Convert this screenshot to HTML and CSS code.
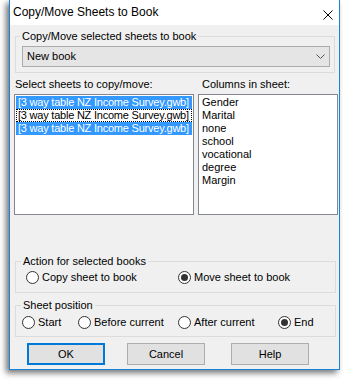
FILE: index.html
```html
<!DOCTYPE html>
<html>
<head>
<meta charset="utf-8">
<link rel="stylesheet" href="styles.css">
</head>
<body>
<div class="window">
  <div class="titlebar">
    <span class="title">Copy/Move Sheets to Book</span>
    <svg class="close" width="10" height="10" viewBox="0 0 10 10"><path d="M0.5 0.5 L9.5 9.5 M9.5 0.5 L0.5 9.5" stroke="#000" stroke-width="1" fill="none"/></svg>
  </div>
  <div class="client">
    <fieldset class="group group-book">
      <legend>Copy/Move selected sheets to book</legend>
      <div class="combo">
        <span>New book</span>
        <svg class="chev" width="9" height="5" viewBox="0 0 9 5"><path d="M0.5 0.5 L4.5 4.5 L8.5 0.5" fill="none" stroke="#555" stroke-width="1"/></svg>
      </div>
    </fieldset>

    <div class="lists">
      <div class="list-col col-sheets">
        <div class="label">Select sheets to copy/move:</div>
        <div class="listbox">
          <div class="item sel">[3 way table NZ Income Survey.gwb]</div>
          <div class="item focus">[3 way table NZ Income Survey.gwb]</div>
          <div class="item sel">[3 way table NZ Income Survey.gwb]</div>
        </div>
      </div>
      <div class="list-col col-columns">
        <div class="label">Columns in sheet:</div>
        <div class="listbox">
          <div class="item">Gender</div>
          <div class="item">Marital</div>
          <div class="item">none</div>
          <div class="item">school</div>
          <div class="item">vocational</div>
          <div class="item">degree</div>
          <div class="item">Margin</div>
        </div>
      </div>
    </div>

    <fieldset class="group group-action">
      <legend>Action for selected books</legend>
      <div class="radios radios-action">
        <div class="radio"><span class="circle"></span><span>Copy sheet to book</span></div>
        <div class="radio checked"><span class="circle"></span><span>Move sheet to book</span></div>
      </div>
    </fieldset>

    <fieldset class="group group-pos">
      <legend>Sheet position</legend>
      <div class="radios radios-pos">
        <div class="radio"><span class="circle"></span><span>Start</span></div>
        <div class="radio"><span class="circle"></span><span>Before current</span></div>
        <div class="radio"><span class="circle"></span><span>After current</span></div>
        <div class="radio checked"><span class="circle"></span><span>End</span></div>
      </div>
    </fieldset>

    <div class="buttons">
      <div class="btn btn-ok">OK</div>
      <div class="btn btn-cancel">Cancel</div>
      <div class="btn btn-help">Help</div>
    </div>
  </div>
</div>
</body>
</html>
```

FILE: styles.css
```css
html, body {
  margin: 0;
  padding: 0;
  background: #ffffff;
}

body {
  width: 343px;
  height: 380px;
  overflow: hidden;
}

.window {
  margin-left: 9px;
  width: 331px;
  height: 370px;
  box-sizing: border-box;
  border-left: 1px solid #1883d7;
  border-right: 1px solid #1883d7;
  border-bottom: 1px solid #1883d7;
  box-shadow: -3px 3px 6px rgba(0, 0, 0, 0.55);
  font-family: "Liberation Sans", Arial, sans-serif;
  font-size: 11px;
  line-height: 13px;
  color: #000;
  display: flex;
  flex-direction: column;
}

.titlebar {
  height: 25px;
  background: #ffffff;
  display: flex;
  justify-content: space-between;
  align-items: flex-start;
  padding: 0 6px 0 3px;
}

.title {
  font-size: 12px;
  line-height: 25px;
}

.close {
  margin-top: 10px;
}

.client {
  flex: 1;
  background: #f0f0f0;
  padding-top: 5px;
  display: flex;
  flex-direction: column;
}

.group {
  margin: 0 0 0 5px;
  padding: 0;
  border: 1px solid #dcdcdc;
  min-inline-size: 0;
  box-sizing: border-box;
}

.group legend {
  padding: 0 2px;
  line-height: 13px;
}

.group-book {
  width: 320px;
}

.group-book legend {
  margin-left: 4px;
}

.combo {
  margin: 3px 4px 5px 6px;
  height: 21px;
  box-sizing: border-box;
  border: 1px solid #acacac;
  background: #e5e5e5;
  display: flex;
  align-items: center;
  justify-content: space-between;
  padding: 0 4px 0 4px;
}

.chev {
  display: block;
}

.lists {
  margin-top: 5px;
  display: flex;
}

.list-col {
  margin-left: 4px;
  display: flex;
  flex-direction: column;
}

.col-sheets {
  width: 180px;
}

.col-columns {
  width: 140px;
}

.label {
  height: 13px;
  margin-bottom: 3px;
}

.col-sheets .label {
  padding-left: 1px;
}

.col-columns .label {
  padding-left: 4px;
}

.listbox {
  height: 121px;
  box-sizing: border-box;
  border: 1px solid #828790;
  background: #ffffff;
  padding: 1px;
  overflow: hidden;
}

.item {
  height: 13px;
  line-height: 13px;
  padding-left: 2px;
  white-space: nowrap;
  box-sizing: border-box;
}

.col-sheets .item {
  letter-spacing: -0.22px;
}

.item.sel {
  background: #3399ff;
  color: #ffffff;
}

.item.focus {
  outline: 1px dotted #000;
  outline-offset: -1px;
}

.group-action {
  margin-top: 40px;
  width: 321px;
}

.group-action legend,
.group-pos legend {
  margin-left: 5px;
}

.radios {
  display: grid;
  height: 13px;
}

.radios-action {
  margin: 3px 0 8px 0;
  padding-left: 10px;
  grid-template-columns: 152px auto;
}

.group-pos {
  margin-top: 6px;
  width: 321px;
}

.radios-pos {
  margin: 4px 0 7px 0;
  padding-left: 6px;
  grid-template-columns: 56px 100px 100px auto;
}

.radio {
  display: flex;
  align-items: center;
  height: 13px;
  white-space: nowrap;
}

.circle {
  width: 13px;
  height: 13px;
  box-sizing: border-box;
  border: 1px solid #333333;
  border-radius: 50%;
  background: #ffffff;
  margin-right: 3px;
  display: flex;
  align-items: center;
  justify-content: center;
  flex: none;
}

.radio.checked .circle::after {
  content: "";
  width: 7px;
  height: 7px;
  border-radius: 50%;
  background: #333333;
}

.buttons {
  margin-top: 6px;
  display: flex;
  padding-left: 17px;
}

.btn {
  width: 78px;
  height: 22px;
  box-sizing: border-box;
  border: 1px solid #adadad;
  background: #e1e1e1;
  display: flex;
  align-items: center;
  justify-content: center;
}

.btn-ok {
  border: 2px solid #0078d7;
}

.btn-cancel {
  margin-left: 22px;
}

.btn-help {
  margin-left: 26px;
}
```
